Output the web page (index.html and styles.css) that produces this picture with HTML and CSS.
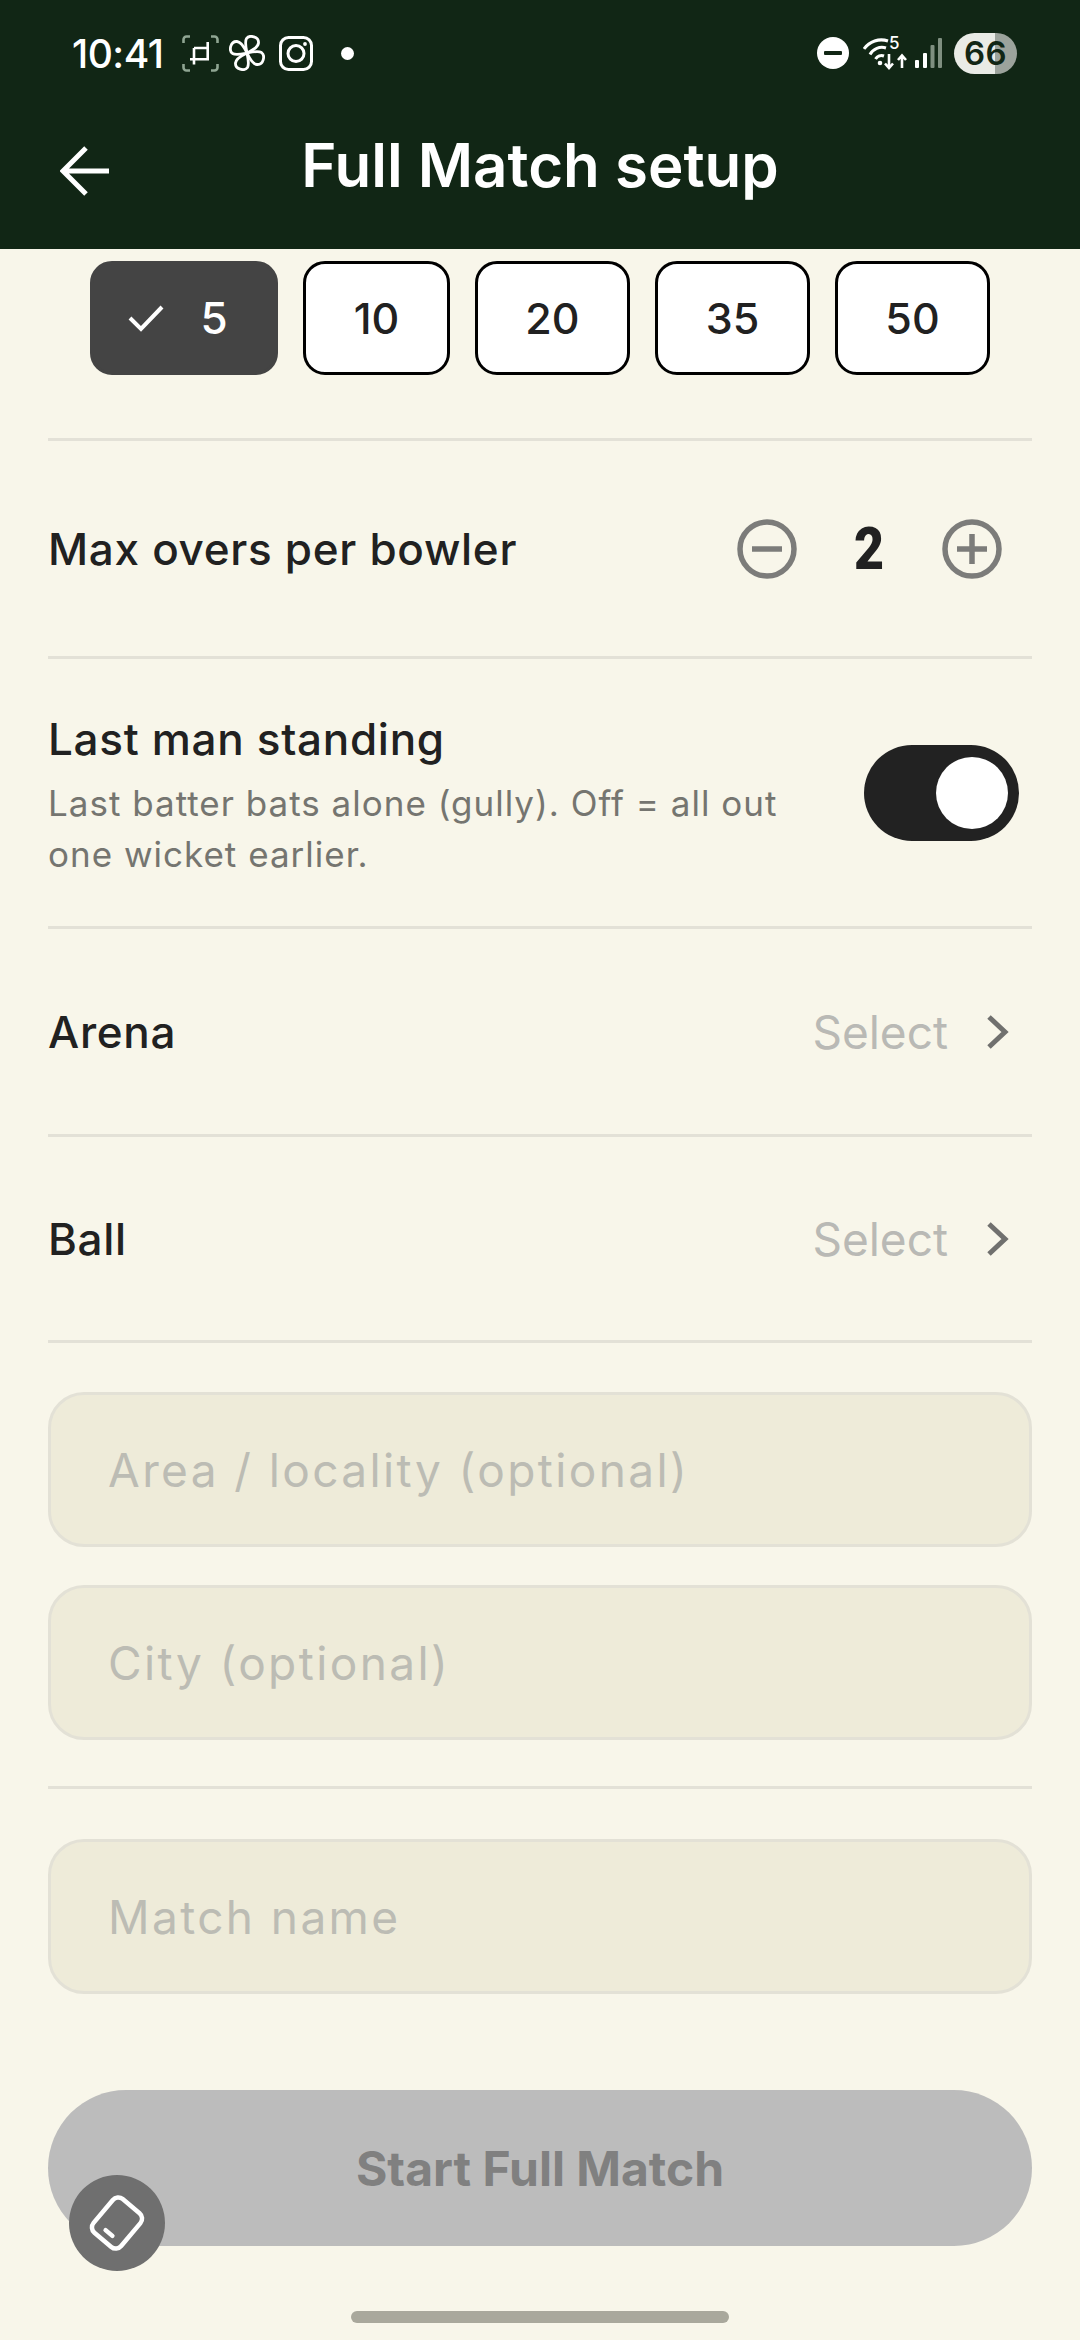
FILE: index.html
```html
<!DOCTYPE html>
<html lang="en">
<head>
<meta charset="utf-8">
<title>Full Match setup</title>
<link rel="stylesheet" href="styles.css">
</head>
<body>
<div class="app">
  <header class="top">
    <div class="status">
      <div class="status-left">
        <span class="time">10:41</span>
        <svg class="si si-crop" viewBox="0 0 37 37" fill="none">
          <path d="M1.500 8V4.500a3 3 0 0 1 3-3H8M29 1.500h3.500a3 3 0 0 1 3 3V8M35.500 29v3.500a3 3 0 0 1-3 3H29M8 35.500H4.500a3 3 0 0 1-3-3V29" stroke="#8fa592" stroke-width="2.600"/>
          <path d="M12 13H25.700V24.300M25.700 7V13M8 24.300H27M12 13V29.500" stroke="#fff" stroke-width="2.600"/>
        </svg>
        <svg class="si si-fan" viewBox="0 0 36 36" fill="none" stroke="#fff" stroke-width="2.800" stroke-linejoin="round">
          <path d="M18 18C17 13 15.500 7 17.500 3.500 20.500-.5 30 1.500 29.500 8 29 13 22 16 18 18Z"/>
          <path d="M18 18C17 13 15.500 7 17.500 3.500 20.500-.5 30 1.500 29.500 8 29 13 22 16 18 18Z" transform="rotate(90 18 18)"/>
          <path d="M18 18C17 13 15.500 7 17.500 3.500 20.500-.5 30 1.500 29.500 8 29 13 22 16 18 18Z" transform="rotate(180 18 18)"/>
          <path d="M18 18C17 13 15.500 7 17.500 3.500 20.500-.5 30 1.500 29.500 8 29 13 22 16 18 18Z" transform="rotate(270 18 18)"/>
        </svg>
        <svg class="si si-ig" viewBox="0 0 34 35" fill="none" stroke="#fff" stroke-width="3">
          <rect x="1.500" y="1.500" width="31" height="32" rx="8"/>
          <circle cx="17" cy="17.500" r="8"/>
          <circle cx="26" cy="8" r="1.900" fill="#fff" stroke="none"/>
        </svg>
        <span class="dot"></span>
      </div>
      <div class="status-right">
        <svg class="si si-dnd" viewBox="0 0 32 32"><circle cx="16" cy="16" r="16" fill="#fff"/><rect x="7" y="14" width="18" height="4" rx="1" fill="#112615"/></svg>
        <div class="wifi">
          <svg class="si si-wifi" viewBox="0 0 44 34" fill="none" stroke="#fff" stroke-width="3">
            <path d="M1 13A21 21 0 0 1 25 5"/>
            <path d="M7 18.500A13.500 13.500 0 0 1 23 12"/>
            <path d="M12.500 23A7 7 0 0 1 21 20"/>
            <circle cx="17" cy="27" r="2.300" fill="#fff" stroke="none"/>
            <path d="M26 18v14M22 27.500l4 4.500 4-4.500M39 32V20M35 24l4-4.500 4 4.500" stroke-width="2.600"/>
          </svg>
          <span class="wifi-5">5</span>
        </div>
        <svg class="si si-signal" viewBox="0 0 27 31">
          <rect x="0" y="22" width="4" height="8" rx="1" fill="#fff"/>
          <rect x="8" y="15" width="4" height="15" rx="1" fill="#fff"/>
          <rect x="15.500" y="7" width="4" height="23" rx="1" fill="#7f8f80"/>
          <rect x="23" y="0" width="4" height="30" rx="1" fill="#7f8f80"/>
        </svg>
        <div class="battery"><span class="battery-num">66</span></div>
      </div>
    </div>
    <div class="nav">
      <svg class="back" viewBox="0 0 50 50" fill="none" stroke="#fff" stroke-width="5"><path d="M49 25H3M26 2 3 25l23 23"/></svg>
      <h1 class="title">Full Match setup</h1>
    </div>
  </header>

  <main class="content">
    <div class="chips">
      <div class="chip chip-on">
        <svg class="check" viewBox="0 0 36 28" fill="none" stroke="#fff" stroke-width="4"><path d="M2 14l11 11L34 3"/></svg>
        <span>5</span>
      </div>
      <div class="chip w147">10</div>
      <div class="chip w155">20</div>
      <div class="chip w155">35</div>
      <div class="chip w155">50</div>
    </div>

    <div class="row row-overs">
      <span class="label">Max overs per bowler</span>
      <div class="stepper">
        <svg class="step" viewBox="0 0 60 60" fill="none" stroke="#7c7c7a" stroke-width="5.500"><circle cx="30" cy="30" r="27"/><path d="M15 30h30"/></svg>
        <span class="step-val"><span class="step-num">2</span></span>
        <svg class="step" viewBox="0 0 60 60" fill="none" stroke="#7c7c7a" stroke-width="5.500"><circle cx="30" cy="30" r="27"/><path d="M15 30h30M30 15v30"/></svg>
      </div>
    </div>

    <div class="row row-lms">
      <div class="lms-text">
        <div class="label">Last man standing</div>
        <div class="sub">Last batter bats alone (gully). Off = all out one wicket earlier.</div>
      </div>
      <div class="toggle"><span class="knob"></span></div>
    </div>

    <div class="row row-sel">
      <span class="label">Arena</span>
      <div class="sel">
        <span class="sel-txt">Select</span>
        <svg class="chev" viewBox="0 0 24 36" fill="none" stroke="#70706e" stroke-width="5"><path d="M3 3l16 15L3 33"/></svg>
      </div>
    </div>
    <div class="row row-sel row-ball">
      <span class="label">Ball</span>
      <div class="sel">
        <span class="sel-txt">Select</span>
        <svg class="chev" viewBox="0 0 24 36" fill="none" stroke="#70706e" stroke-width="5"><path d="M3 3l16 15L3 33"/></svg>
      </div>
    </div>

    <div class="fields">
      <div class="field">Area / locality (optional)</div>
      <div class="field">City (optional)</div>
    </div>
    <div class="fields fields-last">
      <div class="field">Match name</div>
    </div>

    <div class="cta">Start Full Match</div>
  </main>

  <div class="float">
    <svg viewBox="0 0 60 62" fill="none" stroke="#fff" stroke-width="4.500" stroke-linecap="round" stroke-linejoin="round" class="float-ic">
      <rect x="12" y="9" width="36" height="44" rx="7" transform="rotate(40 30 31)"/>
      <path d="M18.600 38.100l6.800 5.800"/>
    </svg>
  </div>
  <div class="home"></div>
</div>
</body>
</html>
```

FILE: styles.css
```css
* { box-sizing: border-box; margin: 0; padding: 0; }
html, body { width: 1080px; height: 2340px; overflow: hidden; }
body { font-family: Inter, "Liberation Sans", sans-serif; background: #f8f6ea; color: #212121; }

.app { position: relative; width: 1080px; height: 2340px; overflow: hidden; }

.top { height: 249px; background: #112615; display: flex; flex-direction: column; }
.status { height: 106px; display: flex; align-items: center; justify-content: space-between; padding: 0 63px 0 72px; }
.status-left, .status-right { display: flex; align-items: center; }
.time { font-size: 39px; font-weight: 500; color: #fff; letter-spacing: -0.5px; margin-right: 19px; }
.si { display: block; flex: none; }
.si-crop { width: 37px; height: 37px; margin-right: 10px; }
.si-fan { width: 36px; height: 36px; margin-right: 14px; }
.si-ig { width: 34px; height: 35px; margin-right: 28px; }
.dot { width: 13px; height: 13px; border-radius: 50%; background: #fff; }
.si-dnd { width: 32px; height: 32px; margin-right: 14px; }
.wifi { position: relative; width: 44px; height: 34px; margin-right: 8px; }
.si-wifi { width: 44px; height: 34px; }
.wifi-5 { position: absolute; left: 26px; top: -3px; font-size: 17px; line-height: 20px; font-weight: 500; color: #fff; }
.si-signal { width: 27px; height: 31px; margin-right: 12px; }
.battery { width: 63px; height: 41px; border-radius: 21px; background: linear-gradient(90deg, #e9ebe6 0 65%, #9ca39c 65% 100%); display: flex; align-items: center; justify-content: center; }
.battery-num { font-size: 33px; font-weight: 600; color: #112615; letter-spacing: 0.5px; }

.nav { position: relative; flex: 1; display: flex; align-items: center; justify-content: center; padding-bottom: 25px; }
.back { position: absolute; left: 60px; top: 40px; width: 50px; height: 50px; }
.title { font-size: 60px; font-weight: 600; color: #fff; }

.content { padding: 0 48px; display: flex; flex-direction: column; }

.chips { height: 192px; padding-top: 12px; display: flex; gap: 25px; padding-left: 42px; border-bottom: 3px solid #e3e1d7; }
.chip { height: 114px; width: 155px; border: 3px solid #000; border-radius: 22px; background: #fff; display: flex; align-items: center; justify-content: center; font-size: 43px; font-weight: 500; color: #212121; }
.w147 { width: 147px; }
.w155 { width: 155px; }
.chip-on { width: 188px; background: #444; border-color: #444; color: #fff; gap: 36px; padding-right: 12px; font-size: 44px; }
.check { width: 36px; height: 28px; }

.row { display: flex; align-items: center; justify-content: space-between; border-bottom: 3px solid #e3e1d7; }
.row-overs { height: 218px; }
.row-lms { height: 270px; }
.row-sel { height: 208px; }
.row-ball { height: 206px; }
.label { font-size: 44px; font-weight: 500; color: #212121; letter-spacing: 0.7px; }

.stepper { display: flex; align-items: center; margin-right: 30px; }
.step { width: 60px; height: 60px; display: block; }
.step-val { width: 145px; text-align: center; font-family: Roboto, sans-serif; font-size: 59px; font-weight: 900; color: #212121; line-height: 60px; }
.step-num { display: inline-block; transform: scaleX(0.88); }

.lms-text { width: 760px; padding-top: 6px; }
.sub { font-size: 35px; line-height: 51px; color: #757570; margin-top: 12px; letter-spacing: 1px; }
.toggle { width: 155px; height: 96px; border-radius: 48px; background: #222; margin-right: 13px; display: flex; align-items: center; justify-content: flex-end; padding-right: 11px; }
.knob { width: 72px; height: 72px; border-radius: 50%; background: #fff; }

.sel { display: flex; align-items: center; gap: 38px; margin-right: 22px; }
.sel-txt { font-size: 46px; color: #b9b9b5; }
.chev { width: 24px; height: 36px; display: block; }

.fields { display: flex; flex-direction: column; gap: 38px; padding: 49px 0 46px; border-bottom: 3px solid #e3e1d7; }
.fields-last { border-bottom: 0; padding-top: 50px; padding-bottom: 0; }
.field { height: 155px; border: 3px solid #e3e1d6; border-radius: 36px; background: #eeebd9; display: flex; align-items: center; padding-left: 57px; font-size: 46px; color: #bcbcb4; letter-spacing: 2.4px; }

.cta { margin-top: 96px; height: 156px; border-radius: 78px; background: #bcbcbc; display: flex; align-items: center; justify-content: center; font-size: 48px; font-weight: 700; color: #808080; }

.float { position: absolute; left: 69px; top: 2175px; width: 96px; height: 96px; border-radius: 50%; background: #6f6f6f; display: flex; align-items: center; justify-content: center; }
.float-ic { width: 60px; height: 62px; }

.home { position: absolute; left: 351px; top: 2311px; width: 378px; height: 12px; border-radius: 6px; background: #a9a89c; }
```
